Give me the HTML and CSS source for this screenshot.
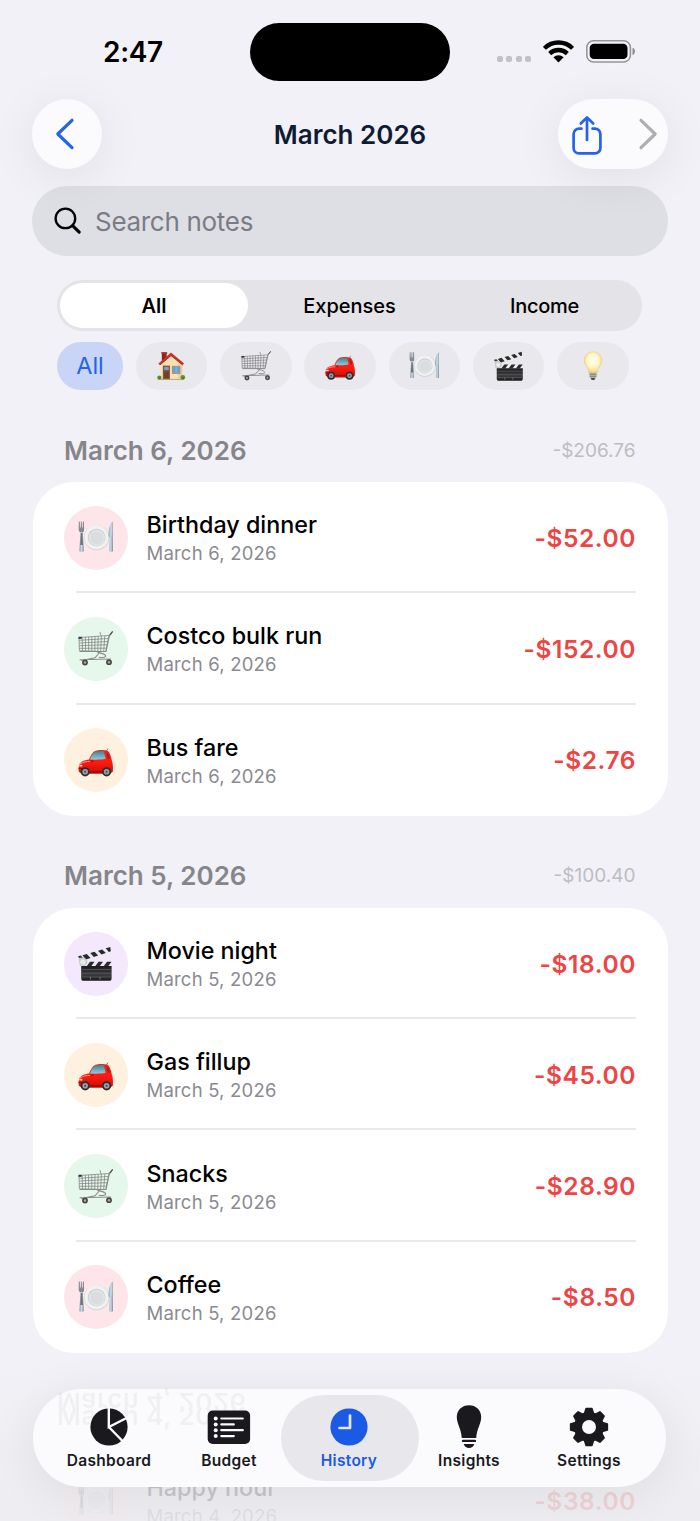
FILE: index.html
```html
<!DOCTYPE html>
<html lang="en">
<head>
    <meta charset="UTF-8">
    <meta name="viewport" content="width=device-width, initial-scale=1.0">
    <title>March 2026</title>
    <link rel="stylesheet" href="styles.css">
</head>
<body>
    <!-- Emoji sprite -->
    <svg class="sprite" width="0" height="0">
        <defs>
            <linearGradient id="gSteel" x1="0" y1="0" x2="1" y2="0">
                <stop offset="0" stop-color="#8e969f"/>
                <stop offset=".5" stop-color="#c9dcec"/>
                <stop offset="1" stop-color="#7d868f"/>
            </linearGradient>
            <linearGradient id="gRed" x1="0" y1="0" x2="0" y2="1">
                <stop offset="0" stop-color="#e8291f"/>
                <stop offset=".5" stop-color="#ff1a10"/>
                <stop offset="1" stop-color="#c90d08"/>
            </linearGradient>
            <linearGradient id="gGlass" x1="0" y1="0" x2="0" y2="1">
                <stop offset="0" stop-color="#3f8294"/>
                <stop offset="1" stop-color="#8fcddb"/>
            </linearGradient>
            <linearGradient id="gDark" x1="0" y1="0" x2="0" y2="1">
                <stop offset="0" stop-color="#1c1c1e"/>
                <stop offset=".6" stop-color="#3c3c3f"/>
                <stop offset="1" stop-color="#19191b"/>
            </linearGradient>
            <radialGradient id="gBulb" cx=".5" cy=".42" r=".6">
                <stop offset="0" stop-color="#fffef2"/>
                <stop offset=".55" stop-color="#fff6c4"/>
                <stop offset="1" stop-color="#f3cf63"/>
            </radialGradient>
        </defs>

        <symbol id="plate" viewBox="0 0 35 35">
            <circle cx="18.7" cy="17.6" r="12.7" fill="#d3d5d7"/>
            <circle cx="18.5" cy="17.2" r="12.1" fill="#f0f1f1"/>
            <circle cx="18.6" cy="17.5" r="8.8" fill="#c9ced2"/>
            <circle cx="18.8" cy="17.9" r="8.1" fill="#e3e5e5"/>
            <circle cx="18.8" cy="17.9" r="6.5" fill="#dadddd"/>
            <path d="M.8 1.5h1l.2 6h.7l.2-6h.9l.2 6h.7l.2-6h1l.2 8.2c0 1.600-.8 2.300-1.400 2.800H2.300C1.400 11.600.7 11 .7 9.700z" fill="#858b92"/>
            <path d="M2.400 12h2.400L5.800 31c0 1-4.400 1-4.400 0z" fill="url(#gSteel)"/>
            <path d="M2.900 13h1.500l.6 12H2.200z" fill="#6d747c"/>
            <path d="M34.600 1.400C31.500 4 30.700 9 30.600 16.500l1.200.8-.5 13.700c0 1 3.700 1 3.700 0z" fill="url(#gSteel)"/>
            <path d="M34 3c-2 3-2.500 7-2.500 12.500l2.500.5z" fill="#bcd3e3"/>
        </symbol>

        <symbol id="cart" viewBox="0 0 35 35">
            <g fill="none" stroke="#787878" stroke-width=".7">
                <path d="M1 6.500 31 4.500 27.800 20.500 1.400 19.700z"/>
                <path d="M1 9.300 30.500 7.500M1.200 12 30 10.500M1.300 14.700 29.300 13.700M1.400 17.300 28.600 17.200"/>
                <path d="M4.200 6.300 4.500 19.700M7.400 6.100 7.600 19.800M10.600 5.900 10.700 19.800M13.800 5.700 13.800 20M17 5.500 16.800 20M20.200 5.300 19.800 20M23.400 5.100 22.700 20.200M26.800 4.900 25.700 20.200M22 1l1 4"/>
            </g>
            <g fill="none" stroke="#8b8b8b" stroke-width="1.100" stroke-linecap="round">
                <path d="M34.400.6 31.400 4.600 28 20.500H2"/>
                <path d="M19 20.800c2.500 1.500 7.500 1.500 8.600 3.700.7 1.800-2.600 2.300-6.600 1.700"/>
                <path d="M2 28.800 32.500 28M3.500 29.500 17 26.800 22 21"/>
            </g>
            <path d="M31.800 4.100 34.600.5" stroke="#4e4e4e" stroke-width="1.100"/>
            <rect x=".5" y="5.800" width="3.200" height="2" fill="#25314a"/>
            <circle cx="7" cy="31.500" r="2.900" fill="#4b4646"/>
            <circle cx="7" cy="31.500" r="1.200" fill="#aaa"/>
            <circle cx="31" cy="31.200" r="2.900" fill="#4b4646"/>
            <circle cx="31" cy="31.200" r="1.200" fill="#aaa"/>
        </symbol>

        <symbol id="car" viewBox="0 0 35 35">
            <path d="M28.500 8 30 5.500" stroke="#555" stroke-width=".7"/>
            <path d="M.8 28.500C.2 25 .6 20.500 3.800 18.800 6 17.500 9 17 11 16.600 12.500 12.500 14.500 9 17.500 7.700 21 6.600 27 6.800 30 8c2 2 3.300 6 3.800 9.500 1.200 2.500 1.300 7 1 11.300-2 1.700-4 2-6 2H7c-3 0-5-.8-6.200-2.300z" fill="url(#gRed)"/>
            <path d="M12 16.500c1.300-4 3.200-7.100 5.800-8 2.400-.7 5.500-.7 8-.4l1.800 7.700c-4 .8-9 1.200-15.600.7z" fill="url(#gGlass)"/>
            <path d="M28.300 8.600c2 1.500 3 4.500 3.600 7l-2 .3z" fill="#a4201c"/>
            <path d="M2 20.800c3-1.800 7-2.500 10-2.400" stroke="#ff9a90" stroke-width="1" fill="none"/>
            <path d="M.7 25.500h5M12 28.800h12" stroke="#8e0b08" stroke-width="1.200"/>
            <rect x="1.200" y="21.800" width="3.200" height="1.800" rx=".9" fill="#ffd9cf"/>
            <ellipse cx="14.300" cy="18" rx="1.600" ry="1.200" fill="#c7130d"/>
            <circle cx="7.200" cy="28.800" r="4.600" fill="#2d2d30"/>
            <circle cx="7.200" cy="28.800" r="2.800" fill="#9b9fa4"/>
            <circle cx="7.200" cy="28.800" r="1" fill="#444"/>
            <circle cx="28.600" cy="28.800" r="4.600" fill="#2d2d30"/>
            <circle cx="28.600" cy="28.800" r="2.800" fill="#9b9fa4"/>
            <circle cx="28.600" cy="28.800" r="1" fill="#444"/>
        </symbol>

        <symbol id="clapper" viewBox="0 0 35 35">
            <path d="M.5 10.500 32.300 1 33 5.200 2.800 15.300z" fill="#ececec"/>
            <path d="M4.500 9.300 8.800 8l3.700 3.900-4.600 1.500zM12.300 7l4.200-1.300 3.700 3.800-4.400 1.400zM20 4.700l4.200-1.300 3.600 3.600-4.300 1.400zM27.800 2.300 32.300 1l.5 4.200-2 .7z" fill="#2a2a2c"/>
            <path d="M3 15.800h31l-.3 4.700H3z" fill="#ececec"/>
            <path d="M12 15.800h4.500l-3.500 4.700H8.500zM20.500 15.800H25l-3.500 4.700H17zM29 15.800h4.500L30 20.500h-4.500z" fill="#2a2a2c"/>
            <path d="M3.200 20h30.400v12c0 2-.8 2.800-2.500 2.800H5.700c-1.700 0-2.500-.8-2.500-2.800z" fill="url(#gDark)"/>
            <path d="M4 23.500h29M4 27.200h29M4 31h29" stroke="#6d6d70" stroke-width=".6"/>
            <path d="M12.500 31v2.500M22 31v2.500" stroke="#8e8e90" stroke-width=".7"/>
            <path d="M.6 10.800 4 11c3 .8 5.600 2.500 5.300 5.300-.2 2.200-1.800 3.400-3.800 3.400H1.700z" fill="#c6c8ca"/>
            <circle cx="5" cy="16" r="2.700" fill="#e8eaea"/>
            <path d="M0 10.200 3 9.500 4.500 11.500 1 12z" fill="#3a3a3c"/>
        </symbol>

        <symbol id="house" viewBox="0 0 35 35">
            <path d="M5.400 14.500 17.500 4l13.200 10.500V33H5.400z" fill="#f6e0b4"/>
            <path d="M26 14h4.700v19H26z" fill="#ecd09b"/>
            <path d="M6.800 2h5.600v7.500L6.800 14z" fill="#8f231d"/>
            <path d="M6.200 1.200h6.800v2H6.200z" fill="#b8372c"/>
            <path d="M17.500 1.800 2.600 14.800l2 1.500L17.500 5.600l13.400 10.700 1.900-1.600z" fill="#c8352b"/>
            <path d="M17.500 5.400 4.600 16.300" stroke="#7e1d18" stroke-width=".8"/>
            <path d="M17.500 5.400 31 16.300" stroke="#7e1d18" stroke-width=".8"/>
            <rect x="8" y="17" width="8.300" height="16" fill="#8b5436"/>
            <rect x="9.600" y="18.600" width="5.200" height="3.600" fill="#6ba8d6"/>
            <rect x="9.600" y="24" width="5.200" height="7.500" fill="#6f3f27"/>
            <rect x="18.600" y="17.300" width="9.800" height="9.400" fill="#b98c5b"/>
            <rect x="19.600" y="18.300" width="7.800" height="7.400" fill="#5fa5df"/>
            <path d="M23.500 18.300v7.400" stroke="#9ecbf0" stroke-width=".7"/>
            <circle cx="3.900" cy="31" r="2.500" fill="#5f9434"/>
            <circle cx="31.300" cy="30.700" r="2.700" fill="#5f9434"/>
            <circle cx="4.500" cy="31.500" r="1" fill="#3d6b1f"/>
            <circle cx="31.500" cy="31.500" r="1" fill="#3d6b1f"/>
            <path d="M2 33.200h31" stroke="#9b8b66" stroke-width=".8"/>
        </symbol>

        <symbol id="bulb" viewBox="0 0 35 35">
            <path d="M17.500 1C23 1 27.700 5.200 27.700 11c0 5.500-5 8-5.400 14.500h-9.600C12.300 19 7.300 16.500 7.300 11 7.300 5.200 12 1 17.500 1z" fill="url(#gBulb)" stroke="#e6c465" stroke-width=".5"/>
            <path d="M13.400 25.200h8.200v4.600l-1.800 3.400h-4.600l-1.800-3.400z" fill="#b3b0a6"/>
            <path d="M13.400 27.300h8.200M13.600 29.600h7.800" stroke="#7b786f" stroke-width=".8"/>
            <path d="M15 31.500h5l-1 2.300h-3z" fill="#4d4c49"/>
        </symbol>
    </svg>

    <div class="phone">
        <!-- Status bar -->
        <div class="status-bar">
            <div class="time">2:47</div>
            <div class="island"></div>
            <div class="status-icons">
                <div class="cell-dots"><i></i><i></i><i></i><i></i></div>
                <svg class="wifi" width="31" height="23" viewBox="0 0 31 23">
                    <g fill="none" stroke="#000" stroke-width="4.300">
                        <path d="M1.400 8.300A20 20 0 0 1 29.600 8.300"/>
                        <path d="M6.700 13.600A12.600 12.600 0 0 1 24.300 13.600"/>
                    </g>
                    <path d="M15.500 22.500 10.400 17.300A7.300 7.300 0 0 1 20.600 17.300z"/>
                </svg>
                <svg class="battery" width="50" height="23" viewBox="0 0 50 23">
                    <rect x=".8" y=".8" width="43.600" height="21.200" rx="6.800" fill="none" stroke="#97969b" stroke-width="1.600"/>
                    <rect x="3.700" y="3.700" width="37.800" height="15.400" rx="4.300"/>
                    <path d="M46.500 7.800c3.300 1.200 3.300 6.200 0 7.400z" fill="#8d8c91"/>
                </svg>
            </div>
        </div>

        <!-- Nav header -->
        <header class="nav">
            <button class="nav-button back">
                <svg width="20" height="32" viewBox="0 0 20 32" fill="none" stroke="#2563eb" stroke-width="3.200" stroke-linecap="round" stroke-linejoin="round">
                    <path d="M17 2.300 2.800 16 17 29.700"/>
                </svg>
            </button>
            <h1>March 2026</h1>
            <div class="nav-button actions">
                <svg width="32" height="41" viewBox="0 0 32 41" fill="none" stroke="#2563eb" stroke-width="2.700" stroke-linecap="round" stroke-linejoin="round">
                    <path d="M10.500 13.700H8a5.400 5.400 0 0 0-5.400 5.400v13.800A5.400 5.400 0 0 0 8 38.300h16a5.400 5.400 0 0 0 5.400-5.400V19.100a5.400 5.400 0 0 0-5.400-5.400h-2.500"/>
                    <path d="M16 25V2.500M9.800 8.500 16 2.400l6.200 6.100"/>
                </svg>
                <svg width="20" height="32" viewBox="0 0 20 32" fill="none" stroke="#aeaeb2" stroke-width="3.200" stroke-linecap="round" stroke-linejoin="round">
                    <path d="M3 2.300 17.200 16 3 29.700"/>
                </svg>
            </div>
        </header>

        <div class="search">
            <svg width="28" height="28" viewBox="0 0 28 28" fill="none" stroke="#000" stroke-linecap="round">
                <circle cx="11.400" cy="11.400" r="9.800" stroke-width="2.300"/>
                <path d="M18.800 18.800 25.200 25.200" stroke-width="3.100"/>
            </svg>
            <span>Search notes</span>
        </div>

        <!-- Filters -->
        <div class="segmented">
            <div class="segment selected">All</div>
            <div class="segment">Expenses</div>
            <div class="segment">Income</div>
        </div>
        <div class="chips">
            <div class="chip chip-all">All</div>
            <div class="chip"><svg><use href="#house"/></svg></div>
            <div class="chip"><svg><use href="#cart"/></svg></div>
            <div class="chip"><svg><use href="#car"/></svg></div>
            <div class="chip"><svg><use href="#plate"/></svg></div>
            <div class="chip"><svg><use href="#clapper"/></svg></div>
            <div class="chip"><svg><use href="#bulb"/></svg></div>
        </div>

        <!-- Transactions -->
        <section class="day">
            <div class="day-header"><h2>March 6, 2026</h2><span>-$206.76</span></div>
            <div class="card">
                <div class="row">
                    <div class="icon dining"><svg><use href="#plate"/></svg></div>
                    <div class="info"><div class="name">Birthday dinner</div><div class="date">March 6, 2026</div></div>
                    <div class="amount">-$52.00</div>
                </div>
                <div class="row">
                    <div class="icon grocery"><svg><use href="#cart"/></svg></div>
                    <div class="info"><div class="name">Costco bulk run</div><div class="date">March 6, 2026</div></div>
                    <div class="amount">-$152.00</div>
                </div>
                <div class="row">
                    <div class="icon transport"><svg><use href="#car"/></svg></div>
                    <div class="info"><div class="name">Bus fare</div><div class="date">March 6, 2026</div></div>
                    <div class="amount">-$2.76</div>
                </div>
            </div>
        </section>

        <section class="day">
            <div class="day-header"><h2>March 5, 2026</h2><span>-$100.40</span></div>
            <div class="card">
                <div class="row">
                    <div class="icon movies"><svg><use href="#clapper"/></svg></div>
                    <div class="info"><div class="name">Movie night</div><div class="date">March 5, 2026</div></div>
                    <div class="amount">-$18.00</div>
                </div>
                <div class="row">
                    <div class="icon transport"><svg><use href="#car"/></svg></div>
                    <div class="info"><div class="name">Gas fillup</div><div class="date">March 5, 2026</div></div>
                    <div class="amount">-$45.00</div>
                </div>
                <div class="row">
                    <div class="icon grocery"><svg><use href="#cart"/></svg></div>
                    <div class="info"><div class="name">Snacks</div><div class="date">March 5, 2026</div></div>
                    <div class="amount">-$28.90</div>
                </div>
                <div class="row">
                    <div class="icon dining"><svg><use href="#plate"/></svg></div>
                    <div class="info"><div class="name">Coffee</div><div class="date">March 5, 2026</div></div>
                    <div class="amount">-$8.50</div>
                </div>
            </div>
        </section>

        <section class="day">
            <div class="day-header"></div>
            <div class="card behind">
                <div class="row">
                    <div class="icon dining"><svg><use href="#plate"/></svg></div>
                    <div class="info"><div class="name">Happy hour</div><div class="date">March 4, 2026</div></div>
                    <div class="amount">-$38.00</div>
                </div>
            </div>
        </section>

        <div class="fade"></div>

        <!-- Tab bar -->
        <nav class="tab-bar">
            <!-- section header refracted through the glass -->
            <div class="glass-text"><span>March 4, 2026</span></div>
            <div class="tab">
                <svg width="44" height="44" viewBox="-22 -22 44 44">
                    <circle r="18.600" fill="#1a1a1e"/>
                    <path d="M-.2-20V0L19-9.800M-.2 0 15 15.500" fill="none" stroke="#fbfbfe" stroke-width="2.400"/>
                </svg>
                <span>Dashboard</span>
            </div>
            <div class="tab">
                <svg width="44" height="44" viewBox="0 -5.500 44 44">
                    <rect x=".7" y="0" width="42.400" height="33.500" rx="5" fill="#1a1a1e"/>
                    <g fill="#fbfbfe">
                        <circle cx="8.700" cy="8" r="2"/><circle cx="8.700" cy="13.900" r="2"/>
                        <circle cx="8.700" cy="19.700" r="2"/><circle cx="8.700" cy="25.600" r="2"/>
                    </g>
                    <path d="M14.300 8h21.500M14.300 13.900h12.500M14.300 19.700h21.500M14.300 25.600h12.500" stroke="#fbfbfe" stroke-width="2.200" stroke-linecap="round"/>
                </svg>
                <span>Budget</span>
            </div>
            <div class="tab active">
                <svg width="44" height="44" viewBox="-22 -22 44 44">
                    <circle r="18.600" fill="#1b5ae4"/>
                    <path d="M1-11.500V1H-9.500" fill="none" stroke="#e8e8ec" stroke-width="2.700" stroke-linecap="round" stroke-linejoin="round"/>
                </svg>
                <span>History</span>
            </div>
            <div class="tab">
                <svg width="44" height="44" viewBox="-9.700 0 44 44">
                    <g fill="#1a1a1e">
                        <path d="M12.300.2C19.300.2 24.500 5 24.500 11.800c0 7.500-4.300 11.200-5 21.200H5.100C4.400 23 .1 19.300.1 11.800.1 5 5.300.2 12.300.2z"/>
                        <rect x="5.200" y="34.700" width="14.200" height="2.400" rx="1.200"/>
                        <path d="M7 39h10.600c-.8 2.500-2.800 3.900-5.300 3.900S7.800 41.500 7 39z"/>
                    </g>
                </svg>
                <span>Insights</span>
            </div>
            <div class="tab">
                <svg width="44" height="44" viewBox="-22 -22 44 44">
                    <circle r="11" fill="none" stroke="#1a1a1e" stroke-width="8"/>
                    <g fill="#1a1a1e" stroke="#1a1a1e" stroke-width="1.500" stroke-linejoin="round">
                        <path id="tooth" d="M-4.800-12.500-3-18.400H3L4.800-12.500z"/>
                        <use href="#tooth" transform="rotate(45)"/>
                        <use href="#tooth" transform="rotate(90)"/>
                        <use href="#tooth" transform="rotate(135)"/>
                        <use href="#tooth" transform="rotate(180)"/>
                        <use href="#tooth" transform="rotate(225)"/>
                        <use href="#tooth" transform="rotate(270)"/>
                        <use href="#tooth" transform="rotate(315)"/>
                    </g>
                </svg>
                <span>Settings</span>
            </div>
        </nav>
    </div>
</body>
</html>
```
FILE: styles.css
```css
* {
    box-sizing: border-box;
}
body {
    margin: 0;
    background: #f2f1f7;
    font-family: Inter, "Liberation Sans", sans-serif;
    color: #000;
}
h1, h2 {
    margin: 0;
}
svg {
    display: block;
    flex: none;
}
.sprite {
    position: absolute;
}
.phone {
    position: relative;
    width: 700px;
    height: 1521px;
    overflow: hidden;
}

/* Status bar */
.status-bar {
    display: grid;
    grid-template-columns: 1fr 200px 1fr;
    align-items: center;
    height: 99px;
    padding: 4px 0 0;
}
.time {
    padding-left: 103px;
    font-size: 28px;
    font-weight: 600;
    line-height: 34px;
    letter-spacing: -0.3px;
}
.island {
    height: 58px;
    border-radius: 29px;
    background: #000;
}
.status-icons {
    display: flex;
    align-items: center;
    justify-content: flex-end;
    padding-right: 64px;
}
.cell-dots {
    display: flex;
    gap: 3.500px;
    padding-top: 15px;
    margin-right: 12px;
}
.cell-dots i {
    width: 6px;
    height: 6px;
    border-radius: 2px;
    background: #c2c1c7;
}
.wifi {
    margin-right: 12px;
}

/* Nav header */
.nav {
    position: relative;
    z-index: 1;
    display: grid;
    grid-template-columns: 1fr auto 1fr;
    align-items: center;
    height: 70px;
    padding: 0 32px;
}
.nav h1 {
    padding-top: 2px;
    font-size: 26px;
    font-weight: 600;
    line-height: 32px;
    color: #0f1b35;
}
.nav-button {
    display: flex;
    align-items: center;
    height: 70px;
    border: 0;
    border-radius: 35px;
    background: #fbfbfe;
    box-shadow: 0 8px 45px 5px rgba(0, 0, 0, 0.06);
}
.back {
    justify-content: center;
    width: 70px;
    padding: 0 4px 0 0;
}
.actions {
    justify-self: end;
    justify-content: space-between;
    width: 110px;
    padding: 2px 10px 0 13px;
}
.actions svg:last-child {
    margin-top: -2px;
}

.search {
    display: flex;
    align-items: center;
    gap: 13px;
    height: 70px;
    margin: 17px 32px 0;
    padding-left: 22px;
    border-radius: 35px;
    background: #dedfe4;
    font-size: 26px;
    letter-spacing: -0.3px;
    color: #7b7b86;
}

/* Filters */
.segmented {
    display: grid;
    grid-template-columns: repeat(3, 1fr);
    height: 51px;
    margin: 24px 58px 0 57px;
    padding: 3px;
    border-radius: 26px;
    background: #e4e3e8;
    font-size: 20px;
    font-weight: 500;
}
.segment {
    display: flex;
    align-items: center;
    justify-content: center;
}
.segment.selected {
    border-radius: 23px;
    background: #fff;
    font-weight: 600;
    margin-right: 5px;
}
.segment:last-child {
    padding-left: 4px;
    letter-spacing: -0.3px;
}
.chips {
    display: flex;
    gap: 12.700px;
    margin: 11px 57px 0;
}
.chip {
    display: flex;
    align-items: center;
    justify-content: center;
    width: 71.600px;
    height: 48px;
    border-radius: 24px;
    background: #e9e8ed;
}
.chip svg {
    width: 30px;
    height: 30px;
}
.chip-all {
    width: 66px;
    padding-bottom: 1px;
    background: #c8d5f6;
    color: #2563eb;
    font-size: 23.500px;
}

/* Transactions */
.day-header {
    display: flex;
    align-items: center;
    justify-content: space-between;
    height: 92px;
    padding: 28px 64.500px 0 64px;
}
.day-header h2 {
    font-size: 26px;
    font-weight: 600;
    color: #85858a;
}
.day-header span {
    font-size: 19px;
    color: #bdbdc2;
}
.card {
    margin: 0 32.500px;
    border-radius: 41px;
    background: #fff;
}
.card.behind {
    background: none;
}
.row {
    position: relative;
    display: flex;
    align-items: center;
    height: 111.300px;
    padding: 0 32px 0 31px;
}
.row:not(:last-child)::after {
    content: "";
    position: absolute;
    left: 43.500px;
    right: 31.500px;
    bottom: 0;
    height: 2px;
    background: #e9e9ea;
}
.icon {
    display: flex;
    align-items: center;
    justify-content: center;
    width: 64px;
    height: 64px;
    margin-right: 19px;
    border-radius: 50%;
}
.icon svg {
    width: 35px;
    height: 35px;
}
.dining {
    background: #fee5ea;
}
.grocery {
    background: #e6f7eb;
}
.transport {
    background: #fff1e0;
}
.movies {
    background: #f3e8fc;
}
.info {
    flex: 1;
}
.name {
    font-size: 23.300px;
    font-weight: 500;
    line-height: 31px;
}
.date {
    font-size: 18.500px;
    line-height: 26px;
    letter-spacing: 0.200px;
    color: #8a8a8f;
}
.amount {
    margin-right: -0.600px;
    font-size: 24.500px;
    font-weight: 600;
    letter-spacing: 0.600px;
    color: #ef4444;
}

/* Bottom fade and tab bar */
.fade {
    position: absolute;
    left: 0;
    right: 0;
    bottom: 0;
    height: 168px;
    background: linear-gradient(rgba(240, 239, 244, 0), rgba(238, 238, 242, 0.8) 65%, rgba(237, 237, 241, 0.86));
}
.tab-bar {
    position: absolute;
    z-index: 2;
    left: 33px;
    bottom: 34px;
    display: grid;
    grid-template-columns: repeat(5, 120px);
    width: 633px;
    height: 98px;
    padding-left: 16px;
    border-radius: 49px;
    background: #fbfbfe;
    box-shadow: 0 8px 45px 5px rgba(0, 0, 0, 0.06);
}
.tab {
    position: relative;
    display: flex;
    flex-direction: column;
    align-items: center;
    padding-top: 16px;
    color: #1a1a1e;
    font-size: 15.500px;
    font-weight: 600;
    letter-spacing: 0.300px;
}
.tab span {
    margin-top: 2px;
    line-height: 20px;
}
.tab.active {
    color: #1b5ae4;
}
.tab.active::before {
    content: "";
    position: absolute;
    z-index: -1;
    inset: 6px -10px 6px -8px;
    border-radius: 43px;
    background: #e8e8ec;
}
.glass-text {
    position: absolute;
    left: 24px;
    top: 20px;
    display: flex;
    align-items: flex-end;
    height: 22px;
    overflow: hidden;
    font-size: 26px;
    font-weight: 600;
    line-height: 30px;
    letter-spacing: 0.500px;
    color: rgba(0, 0, 0, 0.045);
    -webkit-box-reflect: above;
}
```
